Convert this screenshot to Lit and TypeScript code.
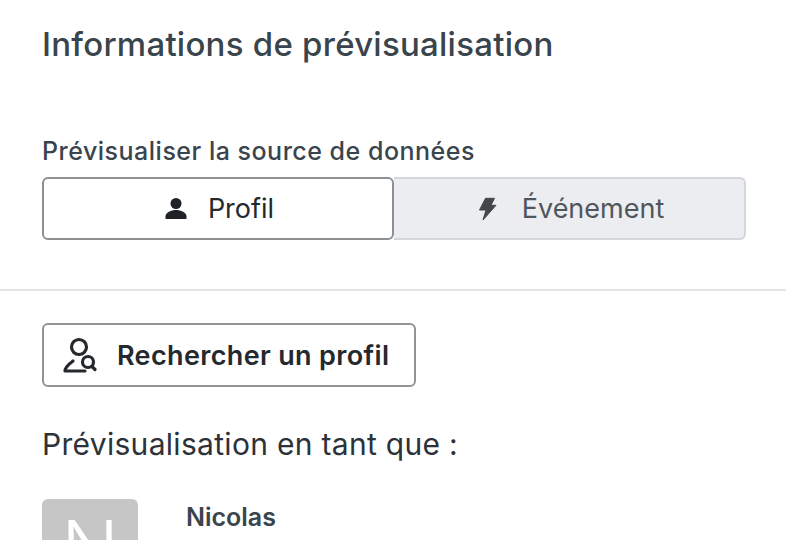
import {css, html, LitElement} from 'lit';
import {customElement} from 'lit/decorators.js';

@customElement("app-root")
export default class AppRoot extends LitElement {
    static styles = css`
        :host {
            display: block;
            width: 786px;
            height: 540px;
            overflow: hidden;
            background: white;
            font-family: "Inter", "Lato", sans-serif;
            font-variant-ligatures: none;
            color: #3a444d;
        }

        .top { padding: 23px 40px 49px 42px; border-bottom: 2px solid #e3e4e5; }
        h1 { margin: 0; font-size: 33px; line-height: 42px; font-weight: 500; letter-spacing: 0.25px; }
        .label { margin-top: 70px; font-size: 25px; line-height: 32px; font-weight: 500; letter-spacing: 0.5px; }

        .segments { display: flex; margin-top: 10px; height: 63px; width: 704px; }
        .segment {
            flex: 0 0 352px;
            display: flex;
            align-items: center;
            justify-content: center;
            font-size: 27px;
            box-sizing: border-box;
        }
        .segment.on { gap: 18px; background: white; border: 2px solid #8e9193; border-radius: 6px; color: #25292d; }
        .segment.off {
            gap: 20px;
            background: #ebedf0;
            border: 2px solid #d3d7da;
            border-left: none;
            border-radius: 0 6px 6px 0;
            color: #51565c;
        }
        .segment svg { width: 28px; height: 28px; }
        .segment.on svg { fill: #1f2327; }
        .segment.off svg { fill: #43474c; stroke: #43474c; stroke-width: 1; stroke-linejoin: round; }

        .bottom { padding: 32px 42px 0; }
        .search {
            display: flex;
            align-items: center;
            gap: 19px;
            width: 374px;
            height: 64px;
            box-sizing: border-box;
            padding-left: 18px;
            border: 2px solid #919395;
            border-radius: 6px;
            font-size: 27px;
            font-weight: 600;
            letter-spacing: 0.35px;
            color: #25292d;
        }
        .search svg { width: 36px; height: 36px; flex: none; }

        .as { margin-top: 37px; font-size: 30px; line-height: 40px; letter-spacing: 0.3px; color: #2c3238; }

        .person { display: flex; gap: 48px; margin-top: 35px; }
        .avatar {
            width: 96px;
            height: 96px;
            display: flex;
            align-items: center;
            justify-content: center;
            background: #c6c6c6;
            border-radius: 6px;
            color: white;
            font-size: 76px;
            font-weight: 300;
        }
        .name { font-size: 25px; line-height: 36px; font-weight: 600; color: #3a444d; }
    `;

    render() {
        return html`
            <div class="top">
                <h1>Informations de prévisualisation</h1>
                <div class="label">Prévisualiser la source de données</div>
                <div class="segments">
                    <div class="segment on">
                        <svg viewBox="0 0 28 28"><circle cx="14" cy="8.5" r="5.5"/><path d="M3.500 24v-2.500c0-4 5.500-6.500 10.500-6.500s10.500 2.500 10.500 6.500V24z"/></svg>
                        Profil
                    </div>
                    <div class="segment off">
                        <svg viewBox="0 0 28 28"><path d="M11.500 3.300h9l-3.500 7h5L9 25l3-10H5.500z"/></svg>
                        Événement
                    </div>
                </div>
            </div>
            <div class="bottom">
                <div class="search">
                    <svg viewBox="0 0 36 36" fill="none" stroke="#25292d" stroke-width="3.200" stroke-linecap="round" stroke-linejoin="round">
                        <circle cx="17" cy="10" r="7.500"/>
                        <path d="M23 34H3c0-3 4-7 8-10"/>
                        <circle cx="26" cy="25" r="5.500"/>
                        <path d="M30 29.500l3 3"/>
                    </svg>
                    Rechercher un profil
                </div>
                <div class="as">Prévisualisation en tant que :</div>
                <div class="person">
                    <div class="avatar">N</div>
                    <div class="name">Nicolas</div>
                </div>
            </div>
        `;
    }
}
